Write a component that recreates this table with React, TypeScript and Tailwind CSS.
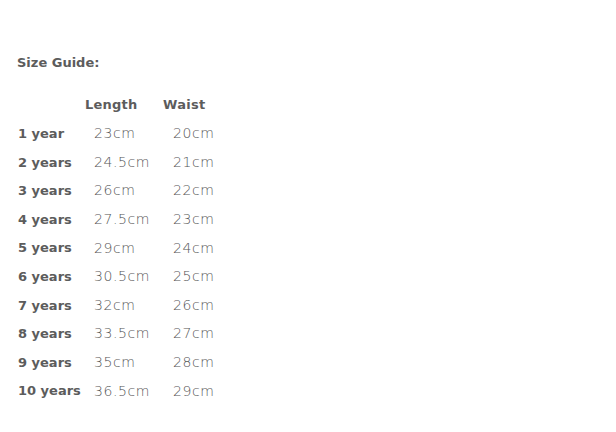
const ROWS: [string, string, string][] = [
  ["1 year", "23cm", "20cm"],
  ["2 years", "24.5cm", "21cm"],
  ["3 years", "26cm", "22cm"],
  ["4 years", "27.5cm", "23cm"],
  ["5 years", "29cm", "24cm"],
  ["6 years", "30.5cm", "25cm"],
  ["7 years", "32cm", "26cm"],
  ["8 years", "33.5cm", "27cm"],
  ["9 years", "35cm", "28cm"],
  ["10 years", "36.5cm", "29cm"],
];

export default function App() {
  return (
    <div className="h-[432px] w-[616px] bg-white pl-[17px] pt-[53px] font-['DejaVu_Sans',sans-serif] text-[13px]">
      <p className="font-bold text-[#5c5c5c]">Size Guide:</p>
      <table className="mt-[18px] border-collapse">
        <thead>
          <tr className="h-[29px]">
            <th className="w-[68px]" />
            <th className="w-[78px] text-left font-bold tracking-[0.2px] text-[#5c5c5c]">Length</th>
            <th className="text-left font-bold tracking-[0.3px] text-[#5c5c5c]">Waist</th>
          </tr>
        </thead>
        <tbody>
          {ROWS.map(([age, len, waist]) => (
            <tr key={age} className="h-[28.6px]">
              <td className="pl-px font-bold text-[#5c5c5c]">{age}</td>
              <td className="pl-[9px] text-[14px] font-extralight tracking-[0.6px] text-[#555]">{len}</td>
              <td className="pl-[10px] text-[14px] font-extralight tracking-[0.6px] text-[#555]">{waist}</td>
            </tr>
          ))}
        </tbody>
      </table>
    </div>
  );
}
